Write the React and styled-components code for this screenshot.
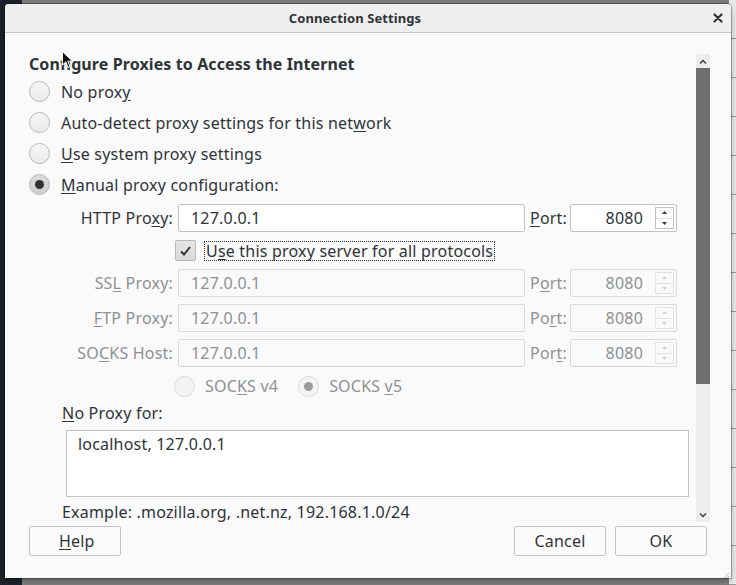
import React from "react";
import styled, { createGlobalStyle, css } from "styled-components";

const Global = createGlobalStyle`
  html, body { margin: 0; padding: 0; }
  body {
    width: 736px; height: 585px; overflow: hidden;
    font-family: "Noto Sans", "DejaVu Sans", sans-serif;
    letter-spacing: 0.2px;
    background:
      linear-gradient(90deg, #1d2129 0 22px, transparent 22px),
      #7c7c7c;
  }
`;

const Desktop = styled.div`
  position: relative;
  width: 736px;
  height: 585px;
`;

const BackWindow = styled.div`
  position: absolute;
  left: 729px; top: 0; width: 7px; height: 585px;
  background: repeating-linear-gradient(180deg, #e9e9e9 0 38px, #9a9a9a 38px 39px);
`;

const Dialog = styled.div`
  position: absolute;
  left: 5px; top: 4px;
  width: 726px; height: 574px;
  background: #fafafa;
  border-radius: 4px 4px 0 0;
  box-shadow: 0 0 0 1px rgba(0,0,0,0.25), 0 2px 6px rgba(0,0,0,0.3);
  display: flex;
  flex-direction: column;
  color: #2e3436;
  overflow: hidden;
`;

const TitleBar = styled.div`
  height: 28px;
  flex: none;
  background: #efefef;
  border-bottom: 1px solid #c4c4c4;
  display: flex;
  align-items: center;
  position: relative;
`;

const Title = styled.div`
  flex: 1;
  text-align: center;
  font-weight: bold;
  font-size: 13px;
  letter-spacing: 0.1px;
  padding-right: 26px;
  color: #2e3436;
`;

const CloseBtn = styled.div`
  position: absolute;
  right: 7px; top: 8px;
  width: 12px; height: 12px;
  display: flex; align-items: center; justify-content: center;
`;

const Main = styled.div`
  flex: 1;
  display: flex;
  min-height: 0;
  padding-right: 21px;
`;

const Scroller = styled.div`
  flex: 1;
  overflow: hidden;
  padding: 21px 0 0 24px;
  box-sizing: border-box;
`;

const Scrollbar = styled.div`
  width: 14px;
  margin: 21px 0 3px;
  background: #ededed;
  display: flex;
  flex-direction: column;
`;

const ScrollArrow = styled.div`
  height: 14px;
  flex: none;
  display: flex; align-items: center; justify-content: center;
`;

const ScrollThumb = styled.div`
  height: 316px;
  background: #6f6f6f;
`;

const ScrollSpacer = styled.div`flex: 1;`;

const Heading = styled.div`
  font-weight: bold;
  font-size: 16px;
  letter-spacing: 0.1px;
  line-height: 20px;
  height: 20px;
  white-space: nowrap;
`;

const RadioList = styled.div`
  margin-top: 2px;
  display: flex;
  flex-direction: column;
`;

const OptionRow = styled.label`
  display: flex;
  align-items: center;
  height: 31px;
  gap: 11px;
  font-size: 16px;
  white-space: nowrap;
  color: ${p => (p.$disabled ? "#8e9192" : "#2e3436")};
`;

const RadioCircle = styled.span`
  width: 21px; height: 21px;
  flex: none;
  border-radius: 50%;
  box-sizing: border-box;
  border: 1px solid ${p => (p.$disabled ? "#d8d8d8" : "#b8b8b5")};
  background: ${p =>
    p.$disabled
      ? "#f4f4f4"
      : p.$checked
      ? "linear-gradient(#dcdcdc, #cfcfcf)"
      : "linear-gradient(#f6f6f5, #ebebea)"};
  display: flex; align-items: center; justify-content: center;
  ${p => p.$checked && css`
    &::after {
      content: "";
      width: 9px; height: 9px; border-radius: 50%;
      background: ${p.$disabled ? "#9a9c9d" : "#2e3436"};
    }
  `}
`;

const U = styled.span`text-decoration: underline; text-underline-offset: 2px;`;

const ProxyGrid = styled.div`
  margin: 4px 0 0 38px;
  display: grid;
  grid-template-columns: 106px 347px 35px 107px;
  column-gap: 5px;
  row-gap: 7px;
  align-items: center;
`;

const FieldLabel = styled.div`
  text-align: right;
  font-size: 16px;
  white-space: nowrap;
  color: ${p => (p.$disabled ? "#8e9192" : "#2e3436")};
`;

const PortLabel = styled(FieldLabel)`text-align: left;`;

const TextInput = styled.div`
  height: 28px;
  box-sizing: border-box;
  border: 1px solid ${p => (p.$disabled ? "#dadada" : "#c3c3c3")};
  border-radius: 2px;
  background: ${p => (p.$disabled ? "#fafafa" : "#ffffff")};
  color: ${p => (p.$disabled ? "#8e9192" : "#2e3436")};
  font-size: 16px;
  display: flex;
  align-items: center;
  padding: 0 12px;
`;

const PortInput = styled(TextInput)`
  padding: 0 1px 0 0;
  justify-content: flex-end;
  gap: 12px;
`;

const Spin = styled.div`
  width: 19px; height: 22px;
  box-sizing: border-box;
  border: 1px solid ${p => (p.$disabled ? "#e2e2e2" : "#c3c3c3")};
  display: flex; flex-direction: column;
  margin-right: 1px;
`;

const SpinHalf = styled.div`
  flex: 1;
  display: flex; align-items: center; justify-content: center;
  & + & { border-top: 1px solid ${p => (p.$disabled ? "#e2e2e2" : "#c3c3c3")}; }
`;

const CheckRow = styled.div`
  grid-column: 2 / 5;
  height: 23px;
  display: flex;
  align-items: center;
  gap: 9px;
  margin-left: -3px;
`;

const CheckBox = styled.span`
  width: 21px; height: 21px;
  box-sizing: border-box;
  border: 1px solid #b8b8b5;
  border-radius: 2px;
  background: linear-gradient(#e4e4e3, #dadad9);
  display: flex; align-items: center; justify-content: center;
`;

const FocusLabel = styled.span`
  font-size: 16px;
  outline: 1px dotted #2e3436;
  outline-offset: 0;
  padding: 0 1px;
  line-height: 18px;
  white-space: nowrap;
`;

const SocksRow = styled.div`
  grid-column: 2 / 5;
  height: 24px;
  display: flex;
  align-items: center;
  margin-left: -4px;
  gap: 20px;
`;

const SocksOption = styled(OptionRow)`
  height: 24px;
  gap: 10px;
`;

const NoProxyBlock = styled.div`
  margin: 3px 0 0 33px;
  display: flex;
  flex-direction: column;
`;

const PlainLabel = styled.div`
  font-size: 16px;
  height: 24px;
  line-height: 24px;
`;

const TextArea = styled.div`
  margin: 5px 0 0 4px;
  width: 623px;
  height: 67px;
  box-sizing: border-box;
  border: 1px solid #c3c3c3;
  background: #fff;
  font-size: 16px;
  padding: 2px 11px;
  line-height: 22px;
`;

const Hint = styled.div`
  font-size: 16px;
  margin-top: 3px;
  line-height: 24px;
  white-space: nowrap;
`;

const ButtonRow = styled.div`
  flex: none;
  display: flex;
  align-items: center;
  padding: 0 24px 22px 24px;
  height: 53px;
  box-sizing: border-box;
`;

const Button = styled.button`
  width: 92px;
  height: 30px;
  box-sizing: border-box;
  border: 1px solid #c3c3c3;
  border-radius: 2px;
  background: #fbfbfb;
  font-family: inherit;
  letter-spacing: inherit;
  font-size: 16px;
  color: #2e3436;
  padding: 0;
  text-align: ${p => (p.$left ? "left" : "center")};
  padding-left: ${p => (p.$left ? "29px" : "0")};
  & + & { margin-left: 9px; }
`;

const Spacer = styled.div`flex: 1;`;

const Grip = styled.div`
  position: absolute;
  right: 1px; bottom: 1px;
  width: 12px; height: 12px;
`;

const Cursor = styled.div`
  position: absolute;
  left: 62px; top: 51px;
  width: 12px; height: 18px;
`;

function Radio({ checked, disabled }) {
  return <RadioCircle $checked={checked} $disabled={disabled} />;
}

function SpinButtons({ disabled }) {
  const c = disabled ? "#d0d0d0" : "#2e3436";
  return (
    <Spin $disabled={disabled}>
      <SpinHalf $disabled={disabled}>
        <svg width="5" height="3" viewBox="0 0 5 3"><path d="M0 3 L2.5 0 L5 3 Z" fill={c} /></svg>
      </SpinHalf>
      <SpinHalf $disabled={disabled}>
        <svg width="5" height="3" viewBox="0 0 5 3"><path d="M0 0 L2.5 3 L5 0 Z" fill={c} /></svg>
      </SpinHalf>
    </Spin>
  );
}

function ProxyRow({ label, port, disabled }) {
  return (
    <>
      <FieldLabel $disabled={disabled}>{label}</FieldLabel>
      <TextInput $disabled={disabled}>127.0.0.1</TextInput>
      <PortLabel $disabled={disabled}>{port}</PortLabel>
      <PortInput $disabled={disabled}>
        <span>8080</span>
        <SpinButtons disabled={disabled} />
      </PortInput>
    </>
  );
}

export default function App() {
  return (
    <>
      <Global />
      <Desktop>
        <BackWindow />
        <Dialog>
          <TitleBar>
            <Title>Connection Settings</Title>
            <CloseBtn>
              <svg width="10" height="10" viewBox="0 0 10 10">
                <path d="M1.5 1.5 L8.5 8.5 M8.5 1.5 L1.5 8.5" stroke="#2e3436" strokeWidth="2.2" strokeLinecap="round" />
              </svg>
            </CloseBtn>
          </TitleBar>
          <Main>
            <Scroller>
              <Heading>Configure Proxies to Access the Internet</Heading>
              <RadioList>
                <OptionRow><Radio /><span>No prox<U>y</U></span></OptionRow>
                <OptionRow><Radio /><span>Auto-detect proxy settings for this net<U>w</U>ork</span></OptionRow>
                <OptionRow><Radio /><span><U>U</U>se system proxy settings</span></OptionRow>
                <OptionRow><Radio checked /><span><U>M</U>anual proxy configuration:</span></OptionRow>
              </RadioList>
              <ProxyGrid>
                <FieldLabel>HTTP Pro<U>x</U>y:</FieldLabel>
                <TextInput>127.0.0.1</TextInput>
                <PortLabel><U>P</U>ort:</PortLabel>
                <PortInput>
                  <span>8080</span>
                  <SpinButtons />
                </PortInput>
                <CheckRow>
                  <CheckBox>
                    <svg width="13" height="12" viewBox="0 0 13 12">
                      <path d="M2 6.5 L5 9.5 L11 2" stroke="#2e3436" strokeWidth="2" fill="none" />
                    </svg>
                  </CheckBox>
                  <FocusLabel>U<U>s</U>e this proxy server for all protocols</FocusLabel>
                </CheckRow>
                <ProxyRow disabled label={<>SS<U>L</U> Proxy:</>} port={<>P<U>o</U>rt:</>} />
                <ProxyRow disabled label={<><U>F</U>TP Proxy:</>} port={<>Po<U>r</U>t:</>} />
                <ProxyRow disabled label={<>SO<U>C</U>KS Host:</>} port={<>Por<U>t</U>:</>} />
                <SocksRow>
                  <SocksOption $disabled><Radio disabled /><span>SOC<U>K</U>S v4</span></SocksOption>
                  <SocksOption $disabled><Radio disabled checked /><span>SOCKS <U>v</U>5</span></SocksOption>
                </SocksRow>
              </ProxyGrid>
              <NoProxyBlock>
                <PlainLabel><U>N</U>o Proxy for:</PlainLabel>
                <TextArea>localhost, 127.0.0.1</TextArea>
                <Hint>Example: .mozilla.org, .net.nz, 192.168.1.0/24</Hint>
              </NoProxyBlock>
            </Scroller>
            <Scrollbar>
              <ScrollArrow>
                <svg width="8" height="5" viewBox="0 0 8 5"><path d="M1 4.5 L4 1.5 L7 4.5" stroke="#2e3436" strokeWidth="1.3" fill="none" /></svg>
              </ScrollArrow>
              <ScrollThumb />
              <ScrollSpacer />
              <ScrollArrow>
                <svg width="8" height="5" viewBox="0 0 8 5"><path d="M1 0.5 L4 3.5 L7 0.5" stroke="#2e3436" strokeWidth="1.3" fill="none" /></svg>
              </ScrollArrow>
            </Scrollbar>
          </Main>
          <ButtonRow>
            <Button $left><U>H</U>elp</Button>
            <Spacer />
            <Button>Cancel</Button>
            <Button>OK</Button>
          </ButtonRow>
          <Grip>
            <svg width="12" height="12" viewBox="0 0 12 12">
              <path d="M11 3 L3 11 M11 6 L6 11 M11 9 L9 11" stroke="#b5b5b5" strokeWidth="1" />
            </svg>
          </Grip>
        </Dialog>
        <Cursor>
          <svg width="12" height="18" viewBox="0 0 12 18">
            <path d="M0.5 0.5 L0.5 14 L3.8 10.8 L6 16.5 L8 15.7 L5.8 10.2 L10.5 10.2 Z" fill="#111" stroke="#fff" strokeWidth="1" strokeLinejoin="round" />
          </svg>
        </Cursor>
      </Desktop>
    </>
  );
}
